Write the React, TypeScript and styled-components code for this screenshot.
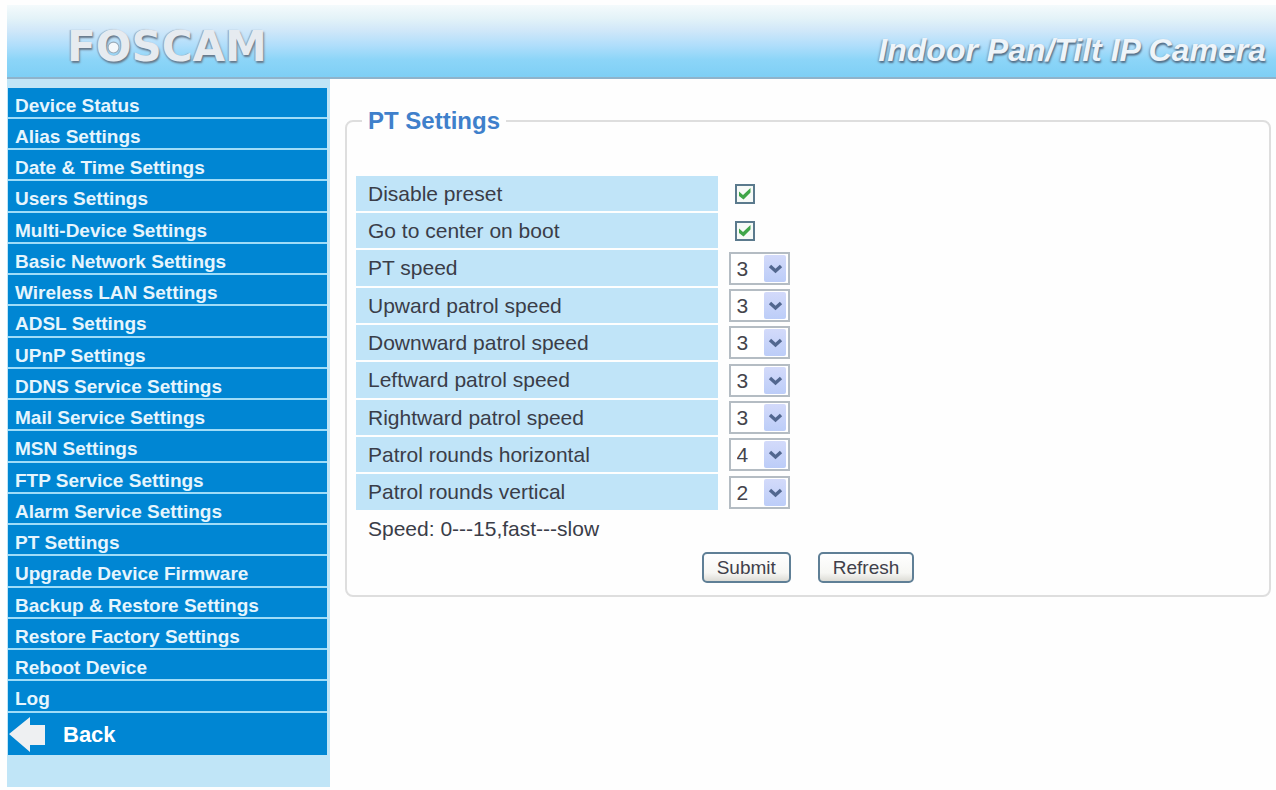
import React, { useState } from 'react';
import styled, { createGlobalStyle } from 'styled-components';

const GlobalStyle = createGlobalStyle`
  * { box-sizing: border-box; }
  body {
    margin: 0;
    background: #fefefe;
    color: #3a3d48;
    font-family: "Liberation Sans", Arial, sans-serif;
    font-size: 21px;
  }
`;

const Page = styled.div`
  padding: 5px 0 3px 7px;
`;

const Header = styled.header`
  display: flex;
  align-items: center;
  justify-content: space-between;
  height: 74px;
  padding: 12px 10px 0 60px;
  border-bottom: 2px solid #8fb3cb;
  background: linear-gradient(#f4fafc 0%, #e4f3f8 18%, #d2e8f9 34%, #b0defb 56%, #8cd5f8 76%, #7ecff5 100%);
`;

const Logo = styled.div`
  position: relative;
  color: #e6ebf0;
  font-family: "DejaVu Sans", sans-serif;
  font-size: 42px;
  font-weight: 700;
  line-height: 44px;
  text-shadow: 1px 2px 2px #66788a, -1px 0 1px #93a5b5;
`;

const Pupil = styled.svg`
  position: absolute;
  left: 40px;
  top: 16px;
  width: 13px;
  height: 13px;
`;

const Product = styled.h1`
  margin: 6px 0 0;
  color: #eef4f9;
  font-size: 32px;
  font-style: italic;
  font-weight: 700;
  line-height: 36px;
  white-space: nowrap;
  text-shadow: 1px 2px 2px #53708a, -1px 1px 2px #7f9bb1;
`;

const Columns = styled.div`
  display: flex;
  align-items: flex-start;
`;

const Sidebar = styled.nav`
  flex: 0 0 323px;
  padding: 9px 3px 32px 1px;
  background: #c0e5f7;
`;

const Menu = styled.ul`
  margin: 0;
  padding: 0;
  list-style: none;
`;

const MenuItem = styled.li`
  height: 31px;
  border-bottom: 2px solid #9fdcf8;
  background: #0086d3;

  &:nth-child(4n) { height: 32px; }
`;

const MenuLink = styled.a`
  display: block;
  padding: 6px 0 0 7px;
  color: #e6f5fd;
  font-size: 19px;
  font-weight: 700;
  line-height: 24px;
  text-decoration: none;
  white-space: nowrap;
`;

const BackLink = styled.a`
  display: flex;
  align-items: center;
  gap: 17px;
  height: 42px;
  padding: 2px 0 0 1px;
  background: #0086d3;
  color: #ffffff;
  font-size: 22px;
  font-weight: 700;
  text-decoration: none;
`;

const Main = styled.main`
  flex: 1;
  min-width: 0;
  padding: 28px 5px 0 15px;
`;

const Panel = styled.fieldset`
  min-width: 0;
  margin: 0;
  padding: 41px 9px 12px;
  border: 2px solid #dedede;
  border-radius: 8px;
`;

const Legend = styled.legend`
  margin-left: 6px;
  padding: 0 6px;
  color: #3f80cb;
  font-size: 24px;
  font-weight: 700;
  line-height: 28px;
`;

const Settings = styled.table`
  width: 100%;
  border-collapse: separate;
  border-spacing: 0;
`;

const Row = styled.tr`
  height: 37px;

  &:nth-child(3n) { height: 38px; }
`;

const LabelCell = styled.th`
  width: 40%;
  padding: 0 12px;
  border-bottom: 2px solid #fefefe;
  background: #c0e4f8;
  font-weight: 400;
  line-height: 24px;
  text-align: left;
`;

const ControlCell = styled.td<{ $inset: number }>`
  padding: 0 0 2px ${(p) => p.$inset}px;
`;

const Note = styled.p`
  margin: 5px 12px 11px;
  line-height: 24px;
`;

const Control = styled.span`
  position: relative;
  display: block;
  width: fit-content;
`;

const Check = styled.input`
  display: block;
  appearance: none;
  width: 20px;
  height: 20px;
  margin: 0;
  border: 2px solid #5b7a8d;
  background: #f7faf7;
`;

const Tick = styled.svg`
  position: absolute;
  left: 4px;
  top: 4px;
  width: 12px;
  height: 12px;
  pointer-events: none;
`;

const Select = styled.select`
  display: block;
  appearance: none;
  width: 61px;
  height: 33px;
  padding: 0 0 0 6px;
  border: 2px solid #b4bcc3;
  border-radius: 0;
  background: #ffffff;
  color: #44444c;
  font-family: inherit;
  font-size: 21px;
`;

const Arrow = styled.svg`
  position: absolute;
  right: 4px;
  top: 3px;
  width: 22px;
  height: 27px;
  pointer-events: none;
`;

const Actions = styled.div`
  display: flex;
  justify-content: center;
  gap: 27px;
`;

const Button = styled.button`
  height: 31px;
  padding: 0 13px;
  border: 2px solid #5f7f96;
  border-radius: 5px;
  background: linear-gradient(#ffffff, #f6f6f3 70%, #dddcd6);
  color: #40404a;
  font-family: inherit;
  font-size: 19px;
  line-height: 24px;
`;

const menu = [
  'Device Status', 'Alias Settings', 'Date & Time Settings', 'Users Settings',
  'Multi-Device Settings', 'Basic Network Settings', 'Wireless LAN Settings',
  'ADSL Settings', 'UPnP Settings', 'DDNS Service Settings', 'Mail Service Settings',
  'MSN Settings', 'FTP Service Settings', 'Alarm Service Settings', 'PT Settings',
  'Upgrade Device Firmware', 'Backup & Restore Settings', 'Restore Factory Settings',
  'Reboot Device', 'Log',
];

const toggles = [
  { id: 'disable-preset', label: 'Disable preset' },
  { id: 'center-on-boot', label: 'Go to center on boot' },
];

const choices = [
  { id: 'pt-speed', label: 'PT speed', value: 3 },
  { id: 'up-speed', label: 'Upward patrol speed', value: 3 },
  { id: 'down-speed', label: 'Downward patrol speed', value: 3 },
  { id: 'left-speed', label: 'Leftward patrol speed', value: 3 },
  { id: 'right-speed', label: 'Rightward patrol speed', value: 3 },
  { id: 'rounds-h', label: 'Patrol rounds horizontal', value: 4 },
  { id: 'rounds-v', label: 'Patrol rounds vertical', value: 2 },
];

const levels = Array.from({ length: 16 }, (_, n) => n);

function CheckBox({ id }: { id: string }) {
  const [on, setOn] = useState(true);
  return (
    <Control>
      <Check id={id} type="checkbox" checked={on} onChange={() => setOn(!on)} />
      {on && (
        <Tick viewBox="0 0 12 12" aria-hidden="true">
          <path d="M0 3.5 L4 7 L11.5 0 V4.5 L4.5 11.5 L0 8 Z" fill="#3fa648" />
        </Tick>
      )}
    </Control>
  );
}

function DropDown({ id, value }: { id: string; value: number }) {
  return (
    <Control>
      <Select id={id} defaultValue={value}>
        {levels.map((n) => <option key={n} value={n}>{n}</option>)}
      </Select>
      <Arrow viewBox="0 0 22 27" aria-hidden="true">
        <defs>
          <linearGradient id={`${id}-face`} x1="0" y1="0" x2="0" y2="1">
            <stop offset="0" stopColor="#d3dafa" />
            <stop offset="1" stopColor="#bccdf8" />
          </linearGradient>
        </defs>
        <rect width="22" height="27" rx="2" fill={`url(#${id}-face)`} />
        <path d="M6 11 L11.5 16 L17 11" fill="none" stroke="#52678f" strokeWidth="3.4" />
      </Arrow>
    </Control>
  );
}

export default function App() {
  return (
    <Page>
      <GlobalStyle />
      <Header>
        <Logo>
          FOSCAM
          <Pupil viewBox="0 0 12 12" aria-hidden="true">
            <circle cx="6" cy="6" r="5" fill="#f4f8fb" stroke="#9aabb9" />
          </Pupil>
        </Logo>
        <Product>Indoor Pan/Tilt IP Camera</Product>
      </Header>
      <Columns>
        <Sidebar>
          <Menu>
            {menu.map((name) => (
              <MenuItem key={name}><MenuLink href="#">{name}</MenuLink></MenuItem>
            ))}
          </Menu>
          <BackLink href="#">
            <svg width="37" height="36" viewBox="0 0 37 36" aria-hidden="true">
              <path d="M0 17 L21 0 V8 H36 V28 H21 V35 Z" fill="#eef0f2" />
            </svg>
            Back
          </BackLink>
        </Sidebar>
        <Main>
          <Panel>
            <Legend>PT Settings</Legend>
            <Settings>
              <tbody>
                {toggles.map(({ id, label }) => (
                  <Row key={id}>
                    <LabelCell scope="row"><label htmlFor={id}>{label}</label></LabelCell>
                    <ControlCell $inset={17}><CheckBox id={id} /></ControlCell>
                  </Row>
                ))}
                {choices.map(({ id, label, value }) => (
                  <Row key={id}>
                    <LabelCell scope="row"><label htmlFor={id}>{label}</label></LabelCell>
                    <ControlCell $inset={11}><DropDown id={id} value={value} /></ControlCell>
                  </Row>
                ))}
              </tbody>
            </Settings>
            <Note>Speed: 0---15,fast---slow</Note>
            <Actions>
              <Button type="button">Submit</Button>
              <Button type="button">Refresh</Button>
            </Actions>
          </Panel>
        </Main>
      </Columns>
    </Page>
  );
}
